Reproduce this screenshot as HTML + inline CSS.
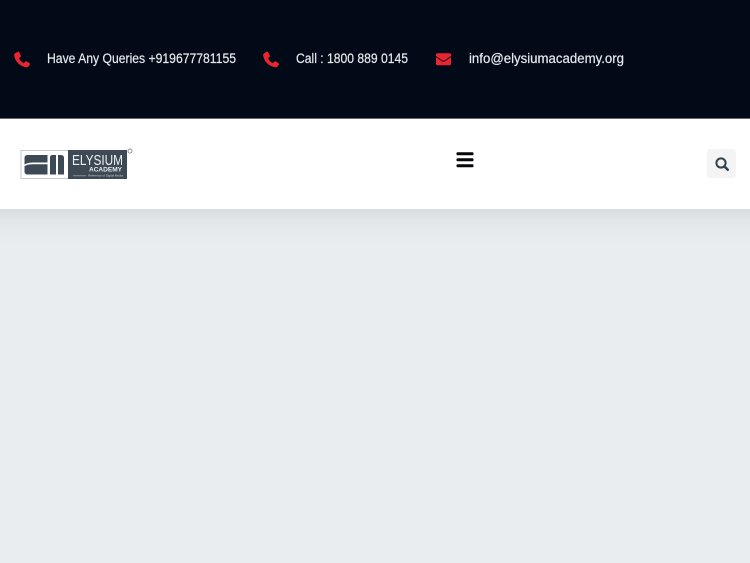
<!DOCTYPE html>
<html lang="en">
<head>
<meta charset="utf-8">
<title>Elysium Academy</title>
<style>
html,body{margin:0;padding:0;width:750px;height:563px;overflow:hidden;background:#e9edf0}
svg{display:block}
text{font-family:"Liberation Sans",sans-serif}
</style>
</head>
<body>
<svg width="750" height="563" viewBox="0 0 750 563" xmlns="http://www.w3.org/2000/svg">
<defs>
<filter id="s" x="-10%" y="-80%" width="120%" height="260%"><feGaussianBlur stdDeviation="15"/></filter>
<filter id="b" x="-5%" y="-5%" width="110%" height="110%"><feGaussianBlur stdDeviation=".35"/></filter>
</defs>
<rect width="750" height="563" fill="#e9edf0"/>
<rect x="-40" y="129" width="830" height="84" fill="#000" fill-opacity=".11" filter="url(#s)"/>
<rect width="750" height="119" fill="#020a17"/>
<rect y="118.6" width="750" height="90.4" fill="#fff"/>

<!-- top bar -->
<path d="M14.6 53.6 L17.6 51.8 Q18.6 51.3 19.2 52.3 L20.8 55.6 Q21.1 56.4 20.5 56.9 L19 58.2 Q20.6 61.6 23.9 63.2 L25.2 61.6 Q25.8 61 26.6 61.4 L29.4 63 Q30.2 63.6 29.9 64.6 L28.2 66.8 Q27.6 67.4 26.5 67.2 C20 66.6 14.8 61 14.2 55.2 Q14.1 54.1 14.6 53.6Z" fill="#e9252f"/>
<path d="M263.6 53.6 L266.6 51.8 Q267.6 51.3 268.2 52.3 L269.8 55.6 Q270.1 56.4 269.5 56.9 L268 58.2 Q269.6 61.6 272.9 63.2 L274.2 61.6 Q274.8 61 275.6 61.4 L278.4 63 Q279.2 63.6 278.9 64.6 L277.2 66.8 Q276.6 67.4 275.5 67.2 C269 66.6 263.8 61 263.2 55.2 Q263.1 54.1 263.6 53.6Z" fill="#e9252f"/>
<path d="M437.6 53.2 H449.4 Q451 53.2 451 54.8 V56 L444.8 60.4 Q443.5 61.2 442.2 60.4 L436 56 V54.8 Q436 53.2 437.6 53.2Z M436 57 L441.8 61.2 Q443.5 62.2 445.2 61.2 L451 57 V63.6 Q451 65.3 449.4 65.3 H437.6 Q436 65.3 436 63.6Z" fill="#e9252f"/>
<g fill="#e6ecee" stroke="#e6ecee" stroke-width=".18" font-size="13.4">
<text x="47" y="63" textLength="189" lengthAdjust="spacingAndGlyphs">Have Any Queries +919677781155</text>
<text x="296" y="63" textLength="112" lengthAdjust="spacingAndGlyphs">Call : 1800 889 0145</text>
<text x="469" y="63" textLength="155" lengthAdjust="spacingAndGlyphs">info@elysiumacademy.org</text>
</g>

<!-- logo -->
<g filter="url(#b)">
<path d="M68 150.5 H21 V178.5 H68" fill="#fff" stroke="#c4c9cc" stroke-width="1"/>
<path d="M27.5 155 H47.5 V162.5 H33 Q28 162.5 24.5 164.5 V158 Q24.5 155 27.5 155Z M24.5 166 Q28 164.3 33 164.3 H47.5 V174.5 H27.5 Q24.5 174.5 24.5 171.5Z" fill="#3c4a55"/>
<path d="M52.5 155 H56 V174.5 H50 V157.5 Q50 155 52.5 155Z M58 155 H61 Q64 155 64 158 V174.5 H58Z" fill="#3c4a55"/>
<rect x="68" y="150" width="59" height="29" fill="#3d4a55"/>
<text x="72" y="165" font-size="14.5" fill="#eef1f2" textLength="51" lengthAdjust="spacingAndGlyphs">ELYSIUM</text>
<text x="89" y="171.5" font-size="6.6" font-weight="bold" fill="#e8ecee" textLength="33" lengthAdjust="spacingAndGlyphs">ACADEMY</text>
<rect x="73" y="175.4" width="13" height=".8" fill="#9aa3aa"/>
<text x="88" y="176.6" font-size="3" fill="#c6ccd0" textLength="35" lengthAdjust="spacingAndGlyphs">Reference of Digital Media</text>
<circle cx="130" cy="151" r="2" fill="none" stroke="#8b9399" stroke-width=".9"/>
</g>

<!-- hamburger -->
<rect x="456.5" y="152.3" width="17" height="3" rx="1" fill="#05070b"/>
<rect x="456.5" y="158.3" width="17" height="3" rx="1" fill="#05070b"/>
<rect x="456.5" y="164.3" width="17" height="3" rx="1" fill="#05070b"/>

<!-- search -->
<rect x="707" y="149" width="29" height="29" rx="3" fill="#f3f4f3"/>
<circle cx="721" cy="163" r="4.6" fill="none" stroke="#33434f" stroke-width="2"/>
<path d="M724.4 166.4 L727.8 169.8" stroke="#33434f" stroke-width="2.5" stroke-linecap="round"/>
</svg>
</body>
</html>
